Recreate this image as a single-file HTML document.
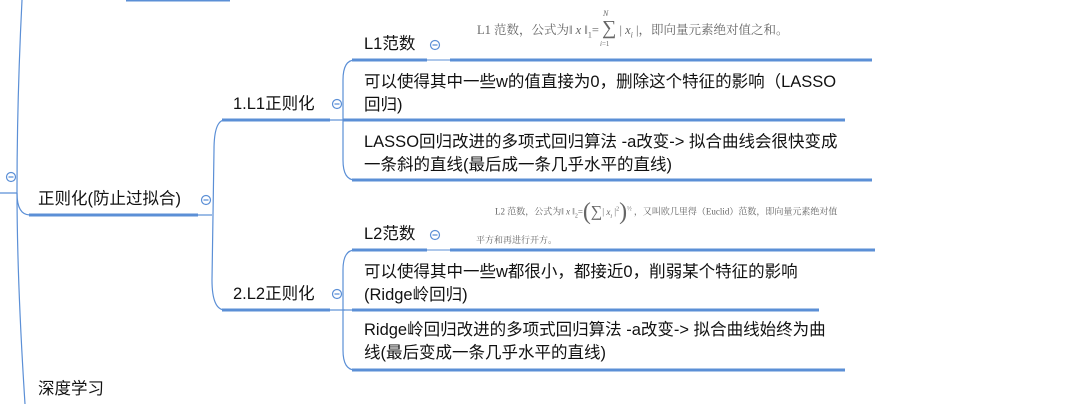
<!DOCTYPE html>
<html><head><meta charset="utf-8"><style>
html,body{margin:0;padding:0;width:1070px;height:404px;overflow:hidden;background:#fff;}
.t{position:absolute;font-family:"Liberation Sans","Noto Sans CJK SC",sans-serif;font-size:16.5px;color:#111;line-height:23px;white-space:nowrap;}
.f{position:absolute;font-family:"Liberation Serif","Noto Serif CJK SC",serif;color:#666;white-space:nowrap;}
</style></head><body>
<svg width="1070" height="404" style="position:absolute;left:0;top:0" fill="none">
<g stroke="#5b8fd6" stroke-width="1.2">
<path d="M22 0 Q17 100 17 190 Q17 280 25 404"/>
<path d="M0 193 L17 193"/>
<path d="M17 193 Q17 215 30 215"/>
<path d="M198 215 L212 215"/>
<path d="M225 120 Q214 120 214 150 L212 280 Q212 310 225 310"/>
<path d="M330 120 L345 120"/>
<path d="M330 310 L345 310"/>
<path d="M355 60 Q343 60 343 80 L343 160 Q343 180 355 180"/>
<path d="M343 120 L355 120"/>
<path d="M355 250 Q343 250 343 270 L343 350 Q343 370 355 370"/>
<path d="M343 310 L355 310"/>
<circle cx="11" cy="177" r="4.5"/>
<circle cx="206" cy="200" r="4.5"/>
<circle cx="337" cy="104" r="4.5"/>
<circle cx="337" cy="294" r="4.5"/>
<circle cx="435" cy="45" r="4.5"/>
<circle cx="435" cy="235" r="4.5"/>
<path d="M8.5 177h5M203.5 200h5M334.5 104h5M334.5 294h5M432.5 45h5M432.5 235h5"/>
</g>
<g stroke="#5b8fd6" stroke-width="3">
<path d="M126 0 L230 0"/>
<path d="M29 215 L198 215"/>
<path d="M222 120 L330 120"/>
<path d="M222 310 L330 310"/>
<path d="M352 60 L427 60 M450 60 L872 60"/>
<path d="M343 120 L845 120"/>
<path d="M352 180 L872 180"/>
<path d="M352 250 L427 250 M450 250 L875 250"/>
<path d="M352 310 L819 310"/>
<path d="M352 370 L845 370"/>
</g>
<path d="M427 60 L450 60 M427 250 L450 250" stroke="#5b8fd6" stroke-width="1"/>
</svg>
<div class="t" style="left:38px;top:188px">正则化(防止过拟合)</div>
<div class="t" style="left:233px;top:93px">1.L1正则化</div>
<div class="t" style="left:233px;top:283px">2.L2正则化</div>
<div class="t" style="left:364px;top:33px">L1范数</div>
<div class="t" style="left:364px;top:223px">L2范数</div>
<div class="t" style="left:364px;top:71px">可以使得其中一些w的值直接为0，删除这个特征的影响（LASSO<br>回归)</div>
<div class="t" style="left:364px;top:131px">LASSO回归改进的多项式回归算法 -a改变-&gt; 拟合曲线会很快变成<br>一条斜的直线(最后成一条几乎水平的直线)</div>
<div class="t" style="left:364px;top:261px">可以使得其中一些w都很小，都接近0，削弱某个特征的影响<br>(Ridge岭回归)</div>
<div class="t" style="left:364px;top:319px">Ridge岭回归改进的多项式回归算法 -a改变-&gt; 拟合曲线始终为曲<br>线(最后变成一条几乎水平的直线)</div>
<div class="t" style="left:38px;top:378px">深度学习</div>
<div class="f" style="left:477px;top:17px;font-size:12.5px">L1 范数，公式为‖ <i>x</i> ‖<sub style="font-size:8px">1</sub>= <span style="font-size:20px">∑</span> | <i>x<sub style="font-size:8px">i</sub></i> |，即向量元素绝对值之和。</div>
<div class="f" style="left:603px;top:9px;font-size:8px"><i>N</i></div>
<div class="f" style="left:600px;top:40px;font-size:7px"><i>i</i>=1</div>
<div class="f" style="left:495px;top:199px;font-size:9px">L2 范数，公式为‖ <i>x</i> ‖<sub style="font-size:6px">2</sub>=<span style="font-size:24px;vertical-align:middle">(</span><span style="font-size:16px;vertical-align:middle">∑</span>| <i>x<sub style="font-size:6px">i</sub></i> |<sup style="font-size:6px">2</sup><span style="font-size:24px;vertical-align:middle">)</span><sup style="font-size:6px">½</sup> ，又叫欧几里得（Euclid）范数，即向量元素绝对值</div>
<div class="f" style="left:476px;top:233px;font-size:9px">平方和再进行开方。</div>
</body></html>
